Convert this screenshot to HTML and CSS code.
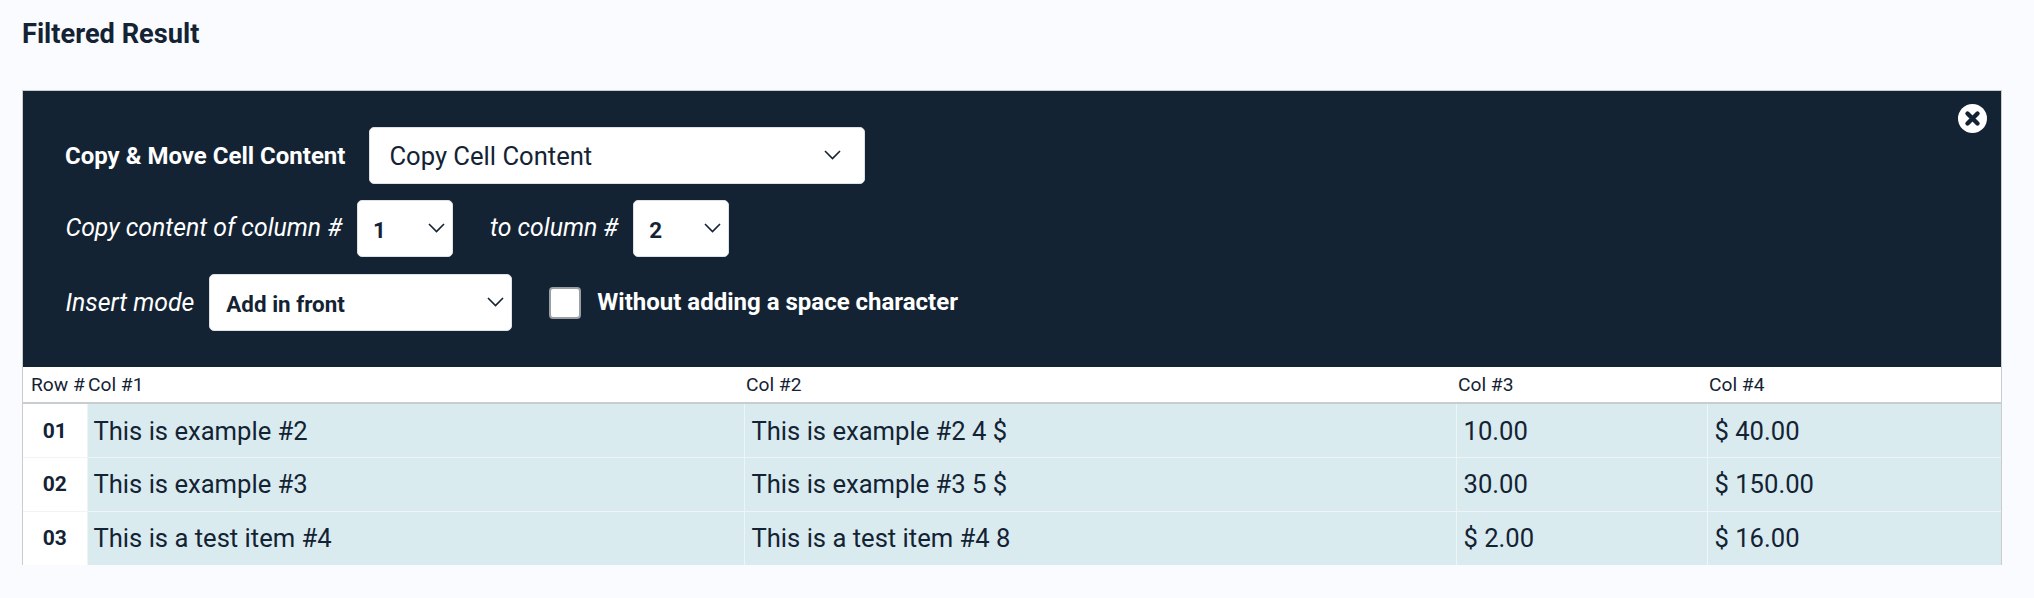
FILE: index.html
```html
<!DOCTYPE html>
<html lang="en">
<head>
<meta charset="utf-8">
<title>Filtered Result</title>
<link rel="stylesheet" href="styles.css">
</head>
<body>
<h2 class="title">Filtered Result</h2>
<div class="card">
  <div class="panel">
    <button class="close" aria-label="Close">
      <svg viewBox="0 0 29 29" width="29" height="29"><circle cx="14.5" cy="14.5" r="14.5" fill="#fff"/><path d="M9.5 9.5l10 10M19.500 9.500l-10 10" stroke="#142334" stroke-width="4.400" stroke-linecap="round"/></svg>
    </button>
    <div class="row">
      <label class="strong gap-24">Copy &amp; Move Cell Content</label>
      <div class="sel sel-main">
        <select><option>Copy Cell Content</option></select>
        <svg class="chev" viewBox="0 0 17 10"><path d="M1 1l7.500 7.500L16 1" fill="none" stroke="#142334" stroke-width="1.600"/></svg>
      </div>
    </div>
    <div class="row row-col">
      <label class="em">Copy content of column #</label>
      <div class="sel sel-num">
        <select><option>1</option></select>
        <svg class="chev" viewBox="0 0 17 10"><path d="M1 1l7.500 7.500L16 1" fill="none" stroke="#142334" stroke-width="1.600"/></svg>
      </div>
      <label class="em to">to column #</label>
      <div class="sel sel-num">
        <select><option>2</option></select>
        <svg class="chev" viewBox="0 0 17 10"><path d="M1 1l7.500 7.500L16 1" fill="none" stroke="#142334" stroke-width="1.600"/></svg>
      </div>
    </div>
    <div class="row row-mode">
      <label class="em">Insert mode</label>
      <div class="sel sel-mode">
        <select><option>Add in front</option></select>
        <svg class="chev" viewBox="0 0 17 10"><path d="M1 1l7.500 7.500L16 1" fill="none" stroke="#142334" stroke-width="1.600"/></svg>
      </div>
      <input class="check" type="checkbox" id="nospace">
      <label class="strong" for="nospace">Without adding a space character</label>
    </div>
  </div>
  <table class="grid">
    <colgroup>
      <col class="c0"><col class="c1"><col class="c2"><col class="c3"><col>
    </colgroup>
    <thead>
      <tr><th>Row #</th><th>Col #1</th><th>Col #2</th><th>Col #3</th><th>Col #4</th></tr>
    </thead>
    <tbody>
      <tr><td class="num">01</td><td>This is example #2</td><td>This is example #2 4 $</td><td>10.00</td><td>$ 40.00</td></tr>
      <tr><td class="num">02</td><td>This is example #3</td><td>This is example #3 5 $</td><td>30.00</td><td>$ 150.00</td></tr>
      <tr><td class="num">03</td><td>This is a test item #4</td><td>This is a test item #4 8</td><td>$ 2.00</td><td>$ 16.00</td></tr>
    </tbody>
  </table>
</div>
</body>
</html>
```
FILE: styles.css
```css
* { box-sizing: border-box; }
html, body { margin: 0; height: 100%; overflow: hidden; }
body {
  background: #f9fbff;
  color: #142334;
  font-family: Roboto, "Liberation Sans", sans-serif;
  padding: 16px 32px 0 22px;
}
.title {
  margin: 0 0 45px;
  font-size: 27.2px;
  line-height: 36px;
  font-weight: 700;
  height: 29px;
}
.card {
  border: 1px solid #c8cdd0;
  border-bottom: 0;
  background: #fff;
}
.panel {
  position: relative;
  background: #142334;
  color: #fff;
  height: 276px;
  padding: 36px 42px 0;
  display: flex;
  flex-direction: column;
  gap: 16px;
}
.close {
  position: absolute;
  top: 13px;
  right: 14px;
  width: 29px;
  height: 29px;
  padding: 0;
  border: 0;
  background: none;
}
.close svg { display: block; }
.row {
  display: flex;
  align-items: center;
  height: 57px;
  font-size: 24px;
}
.row-col .em { padding-bottom: 2px; }
.row-mode { margin-top: 1px; }
.row-mode .strong { padding-bottom: 2px; }
.strong { font-weight: 700; }
.em { font-style: italic; font-weight: 400; font-size: 24.8px; margin-right: 15px; margin-left: 0.5px; }
.gap-24 { margin-right: 24px; }
.to { margin-left: 37px; }
.sel { position: relative; height: 57px; }
.sel select {
  appearance: none;
  width: 100%;
  height: 100%;
  border: 1px solid #dde2e6;
  border-radius: 5px;
  background: #fff;
  color: #142334;
  font: 700 22.4px Roboto, "Liberation Sans", sans-serif;
  padding: 2px 16px 0;
}
.sel-main { width: 496px; }
.sel-main select { font-weight: 400; font-size: 25.6px; padding: 0 16px 0 19px; }
.sel-num { width: 96px; }
.sel-num select { padding-left: 15px; }
.sel-mode { width: 303px; }
.chev {
  position: absolute;
  right: 24px;
  top: 23px;
  width: 17px;
  height: 10px;
  pointer-events: none;
}
.sel-num .chev, .sel-mode .chev { right: 8px; }
.check {
  appearance: none;
  margin: 0 16px 0 37px;
  width: 32px;
  height: 32px;
  background: #fff;
  border: 2px solid #9a9fa3;
  border-radius: 4px;
}
.grid {
  width: 100%;
  border-collapse: collapse;
  table-layout: fixed;
}
.c0 { width: 64px; }
.c1 { width: 657px; }
.c2 { width: 712px; }
.c3 { width: 251px; }
.grid th {
  height: 36px;
  padding: 0 0 0 2px;
  text-align: left;
  font-size: 19.2px;
  font-weight: 400;
  border-bottom: 2px solid #c8cdd0;
}
.grid th:first-child { padding-left: 8px; }
.grid th:nth-child(2) { padding-left: 1px; }
.grid td {
  height: 54px;
  padding: 0 7px;
  font-size: 25.6px;
  background: #d9ebef;
  border-left: 1px solid #eef5f7;
  border-top: 1px solid #eef5f7;
}
.grid td:nth-child(2) { padding-left: 6px; }
.grid tr:first-child td { border-top: 2px solid #fff; padding-top: 2px; }
.grid td.num {
  background: #fff;
  border-left: 0;
  padding-left: 6px;
  padding-right: 6px;
  text-align: center;
  font-size: 21px;
  font-weight: 700;
  border-top-color: #f1f3f4;
}
```
